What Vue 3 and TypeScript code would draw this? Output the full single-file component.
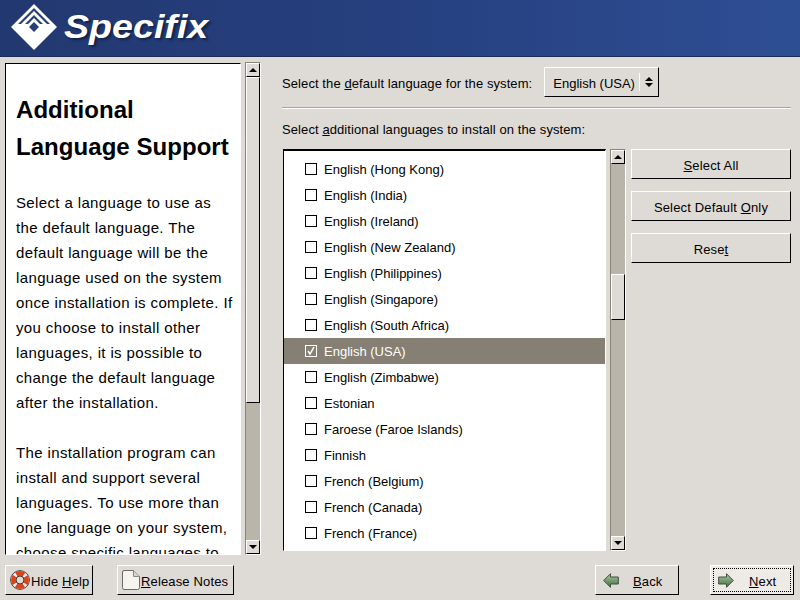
<script setup lang="ts">
interface Lang {
  name: string;
  checked?: boolean;
}

const languages: Lang[] = [
  { name: 'English (Hong Kong)' },
  { name: 'English (India)' },
  { name: 'English (Ireland)' },
  { name: 'English (New Zealand)' },
  { name: 'English (Philippines)' },
  { name: 'English (Singapore)' },
  { name: 'English (South Africa)' },
  { name: 'English (USA)', checked: true },
  { name: 'English (Zimbabwe)' },
  { name: 'Estonian' },
  { name: 'Faroese (Faroe Islands)' },
  { name: 'Finnish' },
  { name: 'French (Belgium)' },
  { name: 'French (Canada)' },
  { name: 'French (France)' },
];
</script>

<template>
  <div class="installer">
    <header class="banner">
      <svg class="logo" width="46" height="46" viewBox="0 0 46 46">
        <path d="M23 0 L46 23 L23 46 L0 23 Z" fill="#fff" />
        <path d="M23 4 L39 20 L36 20 L23 7 L10 20 L7 20 Z" fill="#25407c" />
        <path d="M23 11 L32 20 L29 20 L23 14 L17 20 L14 20 Z" fill="#25407c" />
        <path d="M23 18 L28 23 L23 28 L18 23 Z" fill="#25407c" />
      </svg>
      <span class="brand">Specifix</span>
    </header>

    <main class="content">
      <aside class="help">
        <div class="help-box">
          <h1>Additional<br />Language Support</h1>
          <p>Select a language to use as<br />the default language. The<br />default language will be the<br />language used on the system<br />once installation is complete. If<br />you choose to install other<br />languages, it is possible to<br />change the default language<br />after the installation.</p>
          <p>The installation program can<br />install and support several<br />languages. To use more than<br />one language on your system,<br />choose specific languages to</p>
        </div>
        <div class="scrollbar help-scroll">
          <button class="arrow"><i class="tri up"></i></button>
          <div class="track">
            <div class="thumb"></div>
          </div>
          <button class="arrow"><i class="tri down"></i></button>
        </div>
      </aside>

      <section class="panel">
        <div class="default-row">
          <span class="label">Select the <u>d</u>efault language for the system:</span>
          <div class="combo">
            <span class="combo-value">English (USA)</span>
            <span class="combo-arrows"><i class="tri up"></i><i class="tri down"></i></span>
          </div>
        </div>
        <hr class="rule" />
        <div class="list-label">Select <u>a</u>dditional languages to install on the system:</div>
        <div class="list-row">
          <div class="list-box">
            <div
              v-for="lang in languages"
              :key="lang.name"
              class="lang"
              :class="{ selected: lang.checked }"
            >
              <span class="check">
                <svg v-if="lang.checked" width="10" height="10" viewBox="0 0 10 10">
                  <path d="M2 5 L4 8 L8 1" fill="none" stroke="#fff" stroke-width="1.5" />
                </svg>
              </span>
              {{ lang.name }}
            </div>
          </div>
          <div class="scrollbar list-scroll">
            <button class="arrow"><i class="tri up"></i></button>
            <div class="track">
              <div class="thumb"></div>
            </div>
            <button class="arrow"><i class="tri down"></i></button>
          </div>
          <div class="actions">
            <button class="btn"><span class="txt"><u>S</u>elect All</span></button>
            <button class="btn"><span class="txt">Select Default <u>O</u>nly</span></button>
            <button class="btn"><span class="txt">Rese<u>t</u></span></button>
          </div>
        </div>
      </section>
    </main>

    <footer class="footer">
      <div class="footer-group">
        <button class="btn foot hide-help">
          <svg width="20" height="20" viewBox="0 0 20 20">
            <circle cx="10" cy="10" r="9.3" fill="#7c7c78" stroke="#333" stroke-width="1" />
            <circle cx="10" cy="10" r="6.6" fill="none" stroke="#f4f1ea" stroke-width="4.6" />
            <circle cx="10" cy="10" r="6.6" fill="none" stroke="#dc431b" stroke-width="4.6" stroke-dasharray="8 2.37" stroke-dashoffset="4" />
            <circle cx="10" cy="10" r="4" fill="#dedbd6" stroke="#4a2f28" stroke-width="1" />
          </svg>
          <span class="txt">Hide <u>H</u>elp</span>
        </button>
        <button class="btn foot notes">
          <svg width="18" height="20" viewBox="0 0 18 20">
            <path d="M2 0.5 H11.5 L17.5 6.5 V17.5 Q17.5 19.5 15.5 19.5 H2 Q0.5 19.5 0.5 17.5 V2 Q0.5 0.5 2 0.5 Z" fill="#f6f4ef" stroke="#6a6a66" />
            <path d="M11.5 0.5 V6.5 H17.5" fill="#d6d3cc" stroke="#8a8a86" />
          </svg>
          <span class="txt"><u>R</u>elease Notes</span>
        </button>
      </div>
      <div class="footer-group">
        <button class="btn foot nav back">
          <svg width="16" height="15" viewBox="0 0 16 15">
            <defs>
              <linearGradient id="arrow-fill" x1="0" y1="0" x2="0" y2="1">
                <stop offset="0" stop-color="#a9c8a4" />
                <stop offset="1" stop-color="#44713f" />
              </linearGradient>
            </defs>
            <path d="M0.7 7.5 L7.5 0.7 V4 H15.3 V11 H7.5 V14.3 Z" fill="url(#arrow-fill)" stroke="#3f4f3c" />
          </svg>
          <span class="txt"><u>B</u>ack</span>
        </button>
        <button class="btn foot nav next">
          <span class="focus">
            <svg width="16" height="15" viewBox="0 0 16 15">
              <path d="M15.3 7.5 L8.5 0.7 V4 H0.7 V11 H8.5 V14.3 Z" fill="url(#arrow-fill)" stroke="#3f4f3c" />
            </svg>
            <span class="txt"><u>N</u>ext</span>
          </span>
        </button>
      </div>
    </footer>
  </div>
</template>

<style>
html,
body {
  margin: 0;
  padding: 0;
  background: #dedbd6;
}
</style>

<style scoped>
.installer {
  width: 800px;
  height: 600px;
  overflow: hidden;
  display: flex;
  flex-direction: column;
  background: #dedbd6;
  color: #000;
  font-family: "Liberation Sans", Arial, sans-serif;
  font-size: 13px;
}

.banner {
  height: 57px;
  flex: none;
  display: flex;
  align-items: flex-start;
  padding: 4px 0 0 11px;
  gap: 7px;
  box-sizing: border-box;
  background: linear-gradient(90deg, #223870 0%, #26407f 50%, #2e4e94 100%);
  border-bottom: 1px solid #1a2b58;
}

.brand {
  font-size: 33px;
  line-height: 38px;
  margin-top: 4px;
  font-weight: bold;
  font-style: italic;
  color: #fff;
  transform: scaleX(1.14);
  transform-origin: left center;
  text-shadow: 2px 2px 2px rgba(10, 20, 50, 0.6);
}

.content {
  flex: 1;
  min-height: 0;
  display: flex;
  padding-top: 6px;
}

.help {
  width: 260px;
  flex: none;
  padding-left: 5px;
  box-sizing: border-box;
  display: flex;
  gap: 4px;
  height: 492px;
}

.help-box {
  width: 236px;
  height: 492px;
  box-sizing: border-box;
  flex: none;
  background: #fff;
  border: 1px solid;
  border-color: #000 #fff #fff #000;
  padding: 27px 0 0 10px;
  overflow: hidden;
  white-space: nowrap;
  font-size: 15px;
  line-height: 25px;
  letter-spacing: 0.37px;
}

.help-box h1 {
  margin: 0 0 25px;
  font-size: 24px;
  line-height: 37px;
  font-weight: bold;
  letter-spacing: 0.05px;
}

.help-box p {
  margin: 0 0 25px;
}

.scrollbar {
  width: 16px;
  flex: none;
  display: flex;
  flex-direction: column;
  box-sizing: border-box;
  background: #bab5ab;
  border: 1px solid;
  border-color: #8a8578 #fff #fff #8a8578;
}

.help-scroll {
  margin-top: -1px;
  height: 493px;
}

.arrow {
  width: 14px;
  height: 14px;
  flex: none;
  padding: 0;
  background: #dedbd6;
  border: 1px solid;
  border-color: #fff #000 #000 #fff;
  display: flex;
  align-items: center;
  justify-content: center;
}

.track {
  flex: 1;
  position: relative;
}

.thumb {
  position: absolute;
  left: 0;
  width: 14px;
  box-sizing: border-box;
  background: #dedbd6;
  border: 1px solid;
  border-color: #fff #000 #000 #fff;
}

.help-scroll .thumb {
  top: 0;
  height: 326px;
}

.list-scroll .thumb {
  top: 110px;
  height: 46px;
}

.tri {
  display: block;
  width: 0;
  height: 0;
  border-left: 4px solid transparent;
  border-right: 4px solid transparent;
}

.tri.up {
  border-bottom: 4px solid #000;
}

.tri.down {
  border-top: 4px solid #000;
}

.panel {
  flex: 1;
  min-width: 0;
  padding-left: 22px;
  padding-right: 9px;
}

.default-row {
  display: flex;
  align-items: center;
  height: 30px;
  margin-top: 4px;
  gap: 12px;
}

.label {
  padding-top: 2px;
  letter-spacing: 0.09px;
}

.combo {
  width: 115px;
  height: 30px;
  box-sizing: border-box;
  display: flex;
  align-items: center;
  justify-content: space-between;
  background: #dedbd6;
  border: 1px solid;
  border-color: #fff #000 #000 #fff;
  padding-left: 8px;
}

.combo-value {
  padding-top: 2px;
}

.combo-arrows {
  width: 19px;
  height: 18px;
  box-sizing: border-box;
  border-left: 1px solid #fff;
  display: flex;
  flex-direction: column;
  align-items: center;
  justify-content: center;
  gap: 2px;
}

.rule {
  margin: 10px 0 0;
  border: 0;
  border-top: 1px solid #aaa69d;
  border-bottom: 1px solid #fff;
}

.list-label {
  margin-top: 13px;
  line-height: 16px;
  letter-spacing: 0.09px;
}

.list-row {
  display: flex;
  margin-top: 11px;
}

.list-box {
  width: 323px;
  height: 402px;
  margin-left: 1px;
  box-sizing: border-box;
  flex: none;
  background: #fff;
  border: 1px solid;
  border-color: #000 #fff #fff #000;
  border-width: 2px 1px 1px 1px;
  padding-top: 5px;
  overflow: hidden;
}

.lang {
  height: 26px;
  display: flex;
  align-items: center;
  gap: 7px;
  padding-left: 21px;
  white-space: nowrap;
}

.lang.selected {
  background: #857f74;
  color: #fff;
}

.check {
  width: 12px;
  height: 12px;
  margin-top: -1px;
  box-sizing: border-box;
  flex: none;
  border: 1px solid #000;
  background: #fff;
  display: flex;
  align-items: center;
  justify-content: center;
}

.selected .check {
  background: #857f74;
  border-color: #fff;
}

.list-scroll {
  margin-left: 4px;
  height: 402px;
}

.actions {
  display: flex;
  flex-direction: column;
  gap: 12px;
  margin-left: 5px;
  flex: 1;
}

.btn {
  height: 30px;
  box-sizing: border-box;
  padding: 0;
  background: #dedbd6;
  color: #000;
  border: 1px solid;
  border-color: #fff #000 #000 #fff;
  font: inherit;
  letter-spacing: 0.15px;
  white-space: nowrap;
  display: flex;
  align-items: center;
  justify-content: center;
}

.txt {
  padding-top: 2px;
}

.footer {
  flex: none;
  display: flex;
  justify-content: space-between;
  padding: 0 6px 5px 5px;
  height: 40px;
  box-sizing: border-box;
}

.footer-group {
  display: flex;
  align-items: flex-end;
  gap: 24px;
}

.footer-group + .footer-group {
  gap: 31px;
}

.foot {
  justify-content: flex-start;
  padding-left: 4px;
}

.hide-help {
  width: 88px;
  gap: 1px;
}

.notes {
  width: 117px;
  gap: 1px;
}

.nav {
  width: 84px;
  padding-left: 7px;
  gap: 14px;
}

.next {
  padding: 2px;
  background: #eeebe7;
}

.focus {
  width: 100%;
  height: 100%;
  box-sizing: border-box;
  border: 1px dotted #000;
  display: flex;
  align-items: center;
  padding-left: 4px;
  gap: 15px;
}
</style>
